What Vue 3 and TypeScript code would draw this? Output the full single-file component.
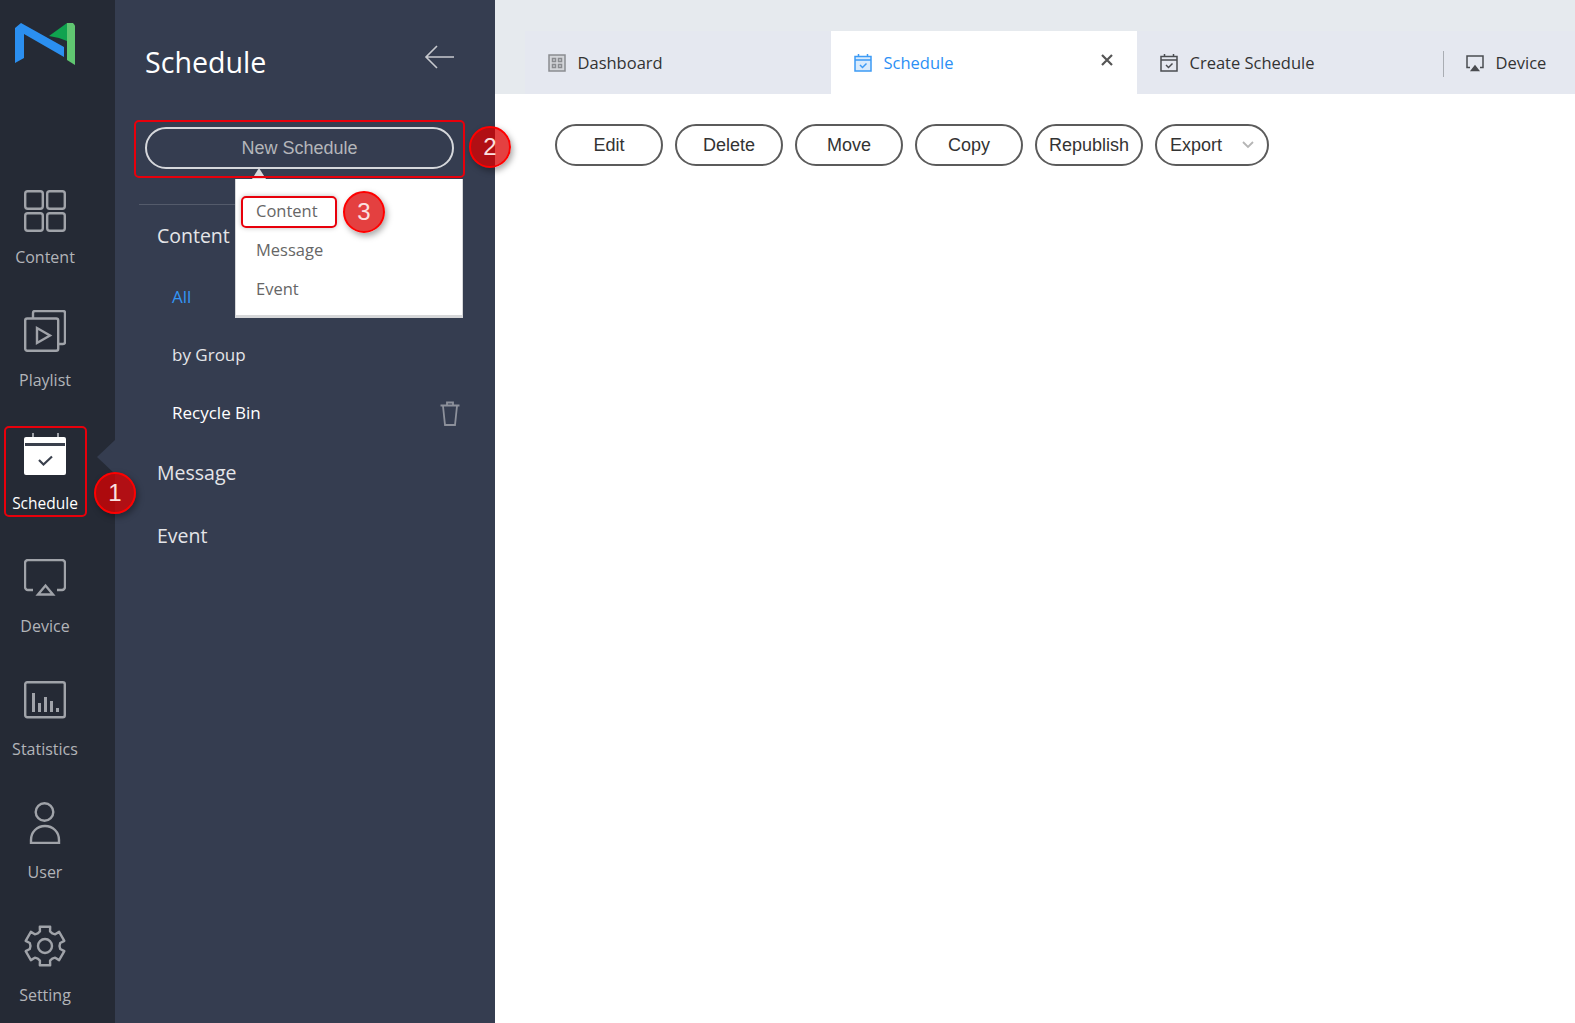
<script setup lang="ts">
const gearPath = (() => {
  const cx = 21, cy = 21
  const pts: string[] = []
  for (let i = 0; i < 6; i++) {
    const a = (i * 60 - 90) * Math.PI / 180
    const spec: [number, number][] = [[-30, 14.5], [-19, 15.5], [-15, 20], [15, 20], [19, 15.5]]
    for (const [d, r] of spec) {
      const t = a + d * Math.PI / 180
      pts.push(`${(cx + r * Math.cos(t)).toFixed(2)} ${(cy + r * Math.sin(t)).toFixed(2)}`)
    }
  }
  return 'M' + pts.join('L') + 'Z'
})()

const actions = ['Edit', 'Delete', 'Move', 'Copy', 'Republish']
</script>

<template>
  <div class="app">
    <nav class="rail">
      <div class="logo">
        <svg width="64" height="46" viewBox="0 0 64 46">
          <path fill="#2b8ff0" d="M0 5 L6 0 L49 24 L49 34 L9 11 L9 35 L0 40 Z" />
          <path fill="#10a34f" d="M34 13 L52 0 L52 18 L44 15 Z" />
          <path fill="#60c671" d="M52 0 L58 0 L60 2.500 L60 42 L52 37 Z" />
        </svg>
      </div>

      <ul class="rail-list">
        <li class="rail-item">
          <svg class="rail-icon" viewBox="0 0 42 42" fill="none" stroke="currentColor" stroke-width="2.400">
            <rect x="1.200" y="1.200" width="17.600" height="17.600" rx="2.500" />
            <rect x="23.200" y="1.200" width="17.600" height="17.600" rx="2.500" />
            <rect x="1.200" y="23.200" width="17.600" height="17.600" rx="2.500" />
            <rect x="23.200" y="23.200" width="17.600" height="17.600" rx="2.500" />
          </svg>
          <span>Content</span>
        </li>
        <li class="rail-item up3">
          <svg class="rail-icon" viewBox="0 0 42 42" fill="none" stroke="currentColor" stroke-width="2.400">
            <rect x="1.200" y="8.500" width="33" height="32.300" rx="2" />
            <path d="M9 8V3a2 2 0 0 1 2-2h28a2 2 0 0 1 2 2v29a2 2 0 0 1-2 2h-5" />
            <path d="M13 18v15l13-7.500z" />
          </svg>
          <span>Playlist</span>
        </li>
        <li class="rail-item active up3">
          <svg class="rail-icon" viewBox="0 0 42 42">
            <path fill="#fff" d="M2 4h38a2 2 0 0 1 2 2v34a2 2 0 0 1-2 2H2a2 2 0 0 1-2-2V6a2 2 0 0 1 2-2z" />
            <path fill="#9fa2a8" d="M8 0h2v4H8zM33 0h2v4h-2z" />
            <rect x="1" y="10" width="40" height="3" fill="#3a404d" />
            <path fill="none" stroke="#3a404d" stroke-width="2.200" d="M15 27l4.500 4.500L28 23.500" />
          </svg>
          <span>Schedule</span>
        </li>
        <li class="rail-item">
          <svg class="rail-icon" viewBox="0 0 42 42" fill="none" stroke="currentColor" stroke-width="2.400">
            <path d="M9 31H4a3 3 0 0 1-3-3V4a3 3 0 0 1 3-3h34a3 3 0 0 1 3 3v24a3 3 0 0 1-3 3h-5" />
            <path d="M14 35.500l7.500-9 7.500 9z" />
          </svg>
          <span>Device</span>
        </li>
        <li class="rail-item up1">
          <svg class="rail-icon" viewBox="0 0 42 42" fill="none" stroke="currentColor" stroke-width="2.400">
            <rect x="1.200" y="1.200" width="39.600" height="35" rx="2" />
            <path d="M9.500 12v19M15.500 22v9M21.500 16v15M27.500 20v11M33.500 27v4" stroke-width="3" />
          </svg>
          <span>Statistics</span>
        </li>
        <li class="rail-item up3">
          <svg class="rail-icon" viewBox="0 0 42 42" fill="none" stroke="currentColor" stroke-width="2.400">
            <circle cx="20.500" cy="10" r="8.800" />
            <path d="M7 41v-3c0-8 6-14 14-14s14 6 14 14v3z" />
          </svg>
          <span>User</span>
        </li>
        <li class="rail-item up3">
          <svg class="rail-icon" viewBox="0 0 42 42" fill="none" stroke="currentColor" stroke-width="2.400" stroke-linejoin="round">
            <path :d="gearPath" />
            <circle cx="21" cy="21" r="7" />
          </svg>
          <span>Setting</span>
        </li>
      </ul>
      <i class="notch"></i>
    </nav>

    <aside class="side">
      <header class="side-head">
        <h1>Schedule</h1>
        <svg class="back" width="32" height="26" viewBox="0 0 32 26" fill="none" stroke="#c7c9ce" stroke-width="1.600">
          <path d="M30 13H2M13 2L2 13l11 11" />
        </svg>
      </header>
      <button class="new-btn" type="button">New Schedule</button>
      <hr class="rule" />
      <ul class="tree">
        <li class="tree-head">Content</li>
        <li class="tree-sub blue">All</li>
        <li class="tree-sub">by Group</li>
        <li class="tree-sub white">
          Recycle Bin
          <svg class="trash" width="20" height="26" viewBox="0 0 20 26" fill="none" stroke="#8d919b" stroke-width="1.800">
            <path d="M.5 4.500h19M7 4.500v-3h6v3M3 5l2 19h10l2-19" />
          </svg>
        </li>
        <li class="tree-head second">Message</li>
        <li class="tree-head third">Event</li>
      </ul>

      <div class="menu">
        <i class="menu-tip"></i>
        <div class="menu-item">Content</div>
        <div class="menu-item">Message</div>
        <div class="menu-item">Event</div>
      </div>
    </aside>

    <main class="main">
      <div class="tabs">
        <div class="tab">
          <svg width="18" height="18" viewBox="0 0 18 18" fill="none" stroke="#8a8c90" stroke-width="1.500">
            <rect x="1" y="1" width="16" height="16" fill="#d3d5d9" />
            <rect x="4.500" y="4.500" width="3" height="3" />
            <rect x="10.500" y="4.500" width="3" height="3" />
            <rect x="4.500" y="10.500" width="3" height="3" />
            <rect x="10.500" y="10.500" width="3" height="3" />
          </svg>
          <span>Dashboard</span>
        </div>
        <div class="tab current">
          <svg width="18" height="18" viewBox="0 0 18 18" fill="none" stroke="#3d9bf5" stroke-width="1.500">
            <rect x="1" y="2.500" width="16" height="14.500" fill="#d9ebfc" />
            <path d="M4.500 0v3M13.500 0v3M1 6h16" />
            <path d="M6 11l2.500 2.500 4-4" />
          </svg>
          <span>Schedule</span>
          <svg class="close" width="12" height="12" viewBox="0 0 12 12" stroke="#555" stroke-width="2.200">
            <path d="M1 1l10 10M11 1L1 11" />
          </svg>
        </div>
        <div class="tab">
          <svg width="18" height="18" viewBox="0 0 18 18" fill="none" stroke="#4a4c50" stroke-width="1.500">
            <rect x="1" y="2.500" width="16" height="14.500" />
            <path d="M4.500 0v3M13.500 0v3M1 6h16" />
            <path d="M6 11l2.500 2.500 4-4" />
          </svg>
          <span>Create Schedule</span>
        </div>
        <div class="tab device">
          <svg width="18" height="18" viewBox="0 0 18 18" fill="none" stroke="#4a4c50" stroke-width="1.500">
            <path d="M4 13.500H1V2h16v11.500h-3" />
            <path d="M5.500 16.500L9 12l3.500 4.500z" fill="#4a4c50" />
          </svg>
          <span>Device</span>
        </div>
      </div>

      <div class="actions">
        <button v-for="a in actions" :key="a" class="pill" type="button">{{ a }}</button>
        <button class="pill export" type="button">
          Export
          <svg width="12" height="8" viewBox="0 0 12 8" fill="none" stroke="#b5b5b5" stroke-width="1.800">
            <path d="M1 1l5 5 5-5" />
          </svg>
        </button>
      </div>
    </main>

    <!-- tutorial annotations drawn over the interface -->
    <div class="mark mark-rail"></div>
    <div class="mark mark-new"></div>
    <div class="mark mark-menu"></div>
    <div class="badge badge-1">1</div>
    <div class="badge badge-2">2</div>
    <div class="badge badge-3">3</div>
  </div>
</template>

<style>
html, body { margin: 0; overflow: hidden; background: #fff; }
</style>

<style scoped>
* { box-sizing: border-box; }
.app {
  position: relative;
  display: flex;
  height: 1023px;
  font-family: "Open Sans", "Liberation Sans", sans-serif;
  overflow: hidden;
}
ul { list-style: none; margin: 0; padding: 0; }

/* icon rail */
.rail {
  position: relative;
  width: 115px;
  flex: none;
  background: #252a35;
}
.logo { height: 190px; padding: 23px 0 0 15px; }
.logo svg { display: block; }
.rail-list { display: flex; flex-direction: column; width: 90px; }
.rail-item {
  height: 123px;
  display: flex;
  flex-direction: column;
  align-items: center;
  font-size: 16px;
  line-height: 22px;
  gap: 14px;
  color: #b2b4b9;
  white-space: nowrap;
}
.rail-icon { width: 42px; height: 42px; flex: none; color: #a0a3a9; }
.up1 .rail-icon { margin: -1px 0 1px; }
.up3 .rail-icon { margin: -3px 0 3px; }
.rail-item.active { color: #fff; font-size: 15.500px; }
.notch {
  position: absolute;
  left: 97px;
  top: 440px;
  border: solid transparent;
  border-width: 17px 18px 17px 0;
  border-right-color: #353d50;
}

/* secondary column */
.side {
  position: relative;
  width: 380px;
  flex: none;
  background: #353d50;
  color: #e4e5e8;
}
.side-head {
  display: flex;
  align-items: flex-start;
  justify-content: space-between;
  height: 127px;
  padding: 41px 39px 0 30px;
}
.side-head h1 {
  margin: 0;
  font-size: 28.600px;
  line-height: 42px;
  font-weight: 400;
  color: #fff;
}
.back { margin-top: 3px; }
.new-btn {
  display: block;
  width: 309px;
  height: 42px;
  margin-left: 30px;
  border: 2px solid #d6d8dc;
  border-radius: 21px;
  background: transparent;
  color: #b4b6ba;
  font: 18px "Liberation Sans", Arial, sans-serif;
}
.rule {
  margin: 35px 0 0 24px;
  width: 100px;
  height: 1px;
  border: 0;
  background: #545b6b;
}
.tree-head { padding-left: 42px; font-size: 19.500px; line-height: 30px; height: 30px; }
.tree-head:first-child { margin-top: 16px; }
.tree-sub {
  position: relative;
  padding-left: 57px;
  font-size: 17px;
  line-height: 24px;
  height: 58px;
  padding-top: 17px;
}
.tree-head + .tree-sub { margin-top: 17px; }
.blue { color: #3395f5; }
.white { color: #fff; height: 62px; }
.trash { position: absolute; left: 325px; top: 17px; }
.second { margin-top: 12px; }
.third { margin-top: 33px; }

.menu {
  position: absolute;
  left: 120px;
  top: 179px;
  width: 228px;
  height: 139px;
  padding-top: 12px;
  background: #fff;
  border-bottom: 3px solid #d6d7d9;
  border-right: 1px solid #d6d7d9;
  border-left: 1px solid #d6d7d9;
  color: #666;
}
.menu-tip {
  position: absolute;
  left: 16px;
  top: -11px;
  border: solid transparent;
  border-width: 0 7px 11px;
  border-bottom-color: #d9dadc;
}
.menu-item {
  padding-left: 20px;
  font-size: 16.500px;
  line-height: 39px;
  height: 39px;
}

/* main */
.main { flex: 1; min-width: 0; background: #fff; }
.tabs {
  display: flex;
  height: 94px;
  padding: 31px 0 0 30px;
  background: #e6eaee;
}
.tab {
  width: 306px;
  display: flex;
  align-items: center;
  gap: 11.500px;
  padding-left: 23px;
  background: #e5e8f0;
  color: #333;
  font-size: 16.500px;
  flex: none;
}
.tab.current { background: #fff; color: #2c8ff5; position: relative; }
.close { position: absolute; right: 24px; top: 23px; }
.tab.device { flex: 1; width: auto; position: relative; }
.tab.device::before {
  content: "";
  position: absolute;
  left: 0;
  top: 20px;
  width: 1px;
  height: 26px;
  background: #a9adb3;
}
.actions {
  display: flex;
  gap: 12px;
  padding: 30px 0 0 60px;
}
.pill {
  width: 108px;
  height: 42px;
  border: 2px solid #5b5b5b;
  border-radius: 21px;
  background: #fff;
  color: #333;
  font: 18px "Liberation Sans", Arial, sans-serif;
  padding: 0;
}
.export {
  width: 114px;
  display: flex;
  align-items: center;
  justify-content: space-between;
  padding: 0 13px 0 13px;
}

/* annotations */
.mark { position: absolute; border: 2px solid #e8000b; border-radius: 5px; pointer-events: none; }
.mark-rail { left: 4px; top: 426px; width: 83px; height: 91px; }
.mark-new { left: 134px; top: 120px; width: 331px; height: 58px; }
.mark-menu { left: 241px; top: 196px; width: 96px; height: 32px; box-shadow: 0 0 5px rgba(0, 0, 0, .25); }
.badge {
  position: absolute;
  width: 42px;
  height: 42px;
  border-radius: 50%;
  border: 2px solid #f00;
  background: rgba(219, 0, 0, .75);
  box-shadow: 2px 3px 6px rgba(0, 0, 0, .35);
  color: #fbe0e0;
  font: 400 24px/38px "Liberation Sans", Arial, sans-serif;
  text-align: center;
}
.badge-1 { left: 94px; top: 472px; }
.badge-2 { left: 469px; top: 126px; }
.badge-3 { left: 343px; top: 191px; }
</style>
